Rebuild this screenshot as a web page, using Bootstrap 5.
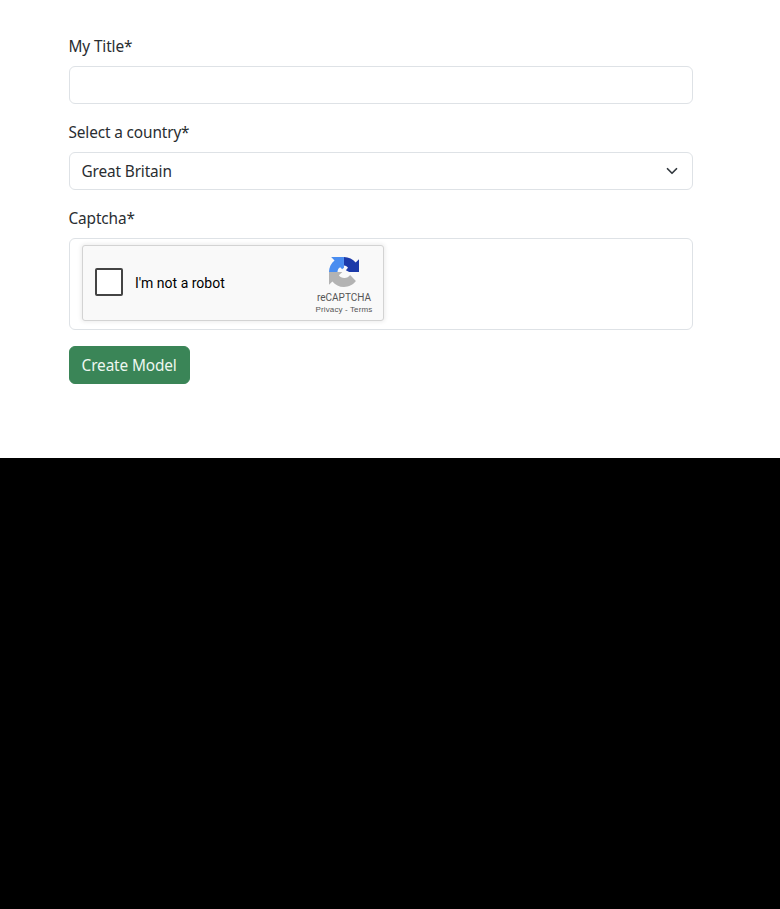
<!DOCTYPE html>
<html lang="en" data-bs-theme="light">
<head>
<meta charset="utf-8">
<meta name="viewport" content="width=device-width, initial-scale=1">
<title>Create Model</title>
<link href="https://cdn.jsdelivr.net/npm/bootstrap@5.3.0/dist/css/bootstrap.min.css" rel="stylesheet">
<style>
  body { background: #000; font-family: "Noto Sans", "Liberation Sans", sans-serif; color: #292d31; }
  .page-sheet { height: 458px; padding: 34px 87px 0 69px; }
  .form-label, .form-select, .btn { font-size: 15.4px; line-height: 24px; letter-spacing: -.14px; }
  .form-label { text-indent: -.5px; padding-top: 1px; margin-bottom: 7px; }
  .form-select, .btn { padding-top: 7px; padding-bottom: 5px; }
  .btn { padding-left: 11.6px; padding-right: 12.4px; }
  .form-select { color: #292d31; padding-left: 11.5px; background-image: url("data:image/svg+xml,%3csvg xmlns='http://www.w3.org/2000/svg' viewBox='0 0 16 16'%3e%3cpath fill='none' stroke='%23343a40' stroke-linecap='round' stroke-linejoin='round' stroke-width='2.3' d='m2 5 6 6 6-6'/%3e%3c/svg%3e"); }
  .form-control, .form-select { border-color: #dee2e6; }
  .captcha-field { height: 92px; padding: 6px 12px; }
  .captcha-widget { width: 302px; height: 76px; background: #f9f9f9; border: 1px solid #d3d3d3; border-radius: 3px; box-shadow: 0 0 4px 1px rgba(0,0,0,.08); font-family: Roboto, sans-serif; padding: 0 10px 0 12px; }
  .captcha-check { width: 28px; height: 28px; border: 2px solid #444; border-radius: 2px; background: #fff; margin: 0 12px 2px 0; }
  .captcha-text { font-size: 14px; line-height: 17px; color: #000; }
  .captcha-brand { width: 58px; padding-top: 11px; color: #555; }
  .captcha-name { font-size: 10px; line-height: 10px; margin-top: 6px; }
  .captcha-links { font-family: "Liberation Sans", sans-serif; font-size: 8px; line-height: 10px; margin-top: 2px; white-space: nowrap; letter-spacing: .12px; }
  .btn-success { --bs-btn-bg: #3a8557; --bs-btn-border-color: #3a8557; --bs-btn-color: #edf7f0; }
</style>
<script src="https://cdn.jsdelivr.net/npm/bootstrap@5.3.0/dist/js/bootstrap.bundle.min.js"></script>
</head>
<body>
<main class="page-sheet bg-white">
  <form>
    <div class="mb-3">
      <label class="form-label d-block" for="title">My Title*</label>
      <input type="text" class="form-control" id="title">
    </div>
    <div class="mb-3">
      <label class="form-label d-block" for="country">Select a country*</label>
      <select class="form-select" id="country"><option selected>Great Britain</option></select>
    </div>
    <div class="mb-3">
      <label class="form-label d-block">Captcha*</label>
      <div class="form-control captcha-field">
        <div class="captcha-widget d-flex justify-content-between">
          <div class="d-flex align-items-center">
            <span class="captcha-check"></span>
            <span class="captcha-text">I'm not a robot</span>
          </div>
          <div class="captcha-brand d-flex flex-column align-items-center">
            <svg width="30" height="30" viewBox="0 0 64 64" aria-hidden="true">
              <path fill="#1c3aa9" d="M64 32V4.7l-7.2 7.2C51 4.7 42 .1 32 .1V18c4 .2 7 2 8.5 5L36 28l7 4Z"/>
              <path fill="#4a8df0" d="M31.9.1H4.6l7.2 7.2C4.6 13.1 0 22 0 32h18c.4-4.5 2.2-8.4 6-10l4 4 3.9-3Z"/>
              <path fill="#b3b3b3" d="M0 32v27.3l7.2-7.2C13 59.3 22 63.9 32 63.9c10.4 0 19.6-5 25.4-12.6L45 38.6c-3 4.2-7.2 6.4-12.5 6.2-5-.2-8.8-2.3-11.5-6L28.5 32Z"/>
            </svg>
            <div class="captcha-name">reCAPTCHA</div>
            <div class="captcha-links">Privacy - Terms</div>
          </div>
        </div>
      </div>
    </div>
    <button type="button" class="btn btn-success">Create Model</button>
  </form>
</main>
</body>
</html>
